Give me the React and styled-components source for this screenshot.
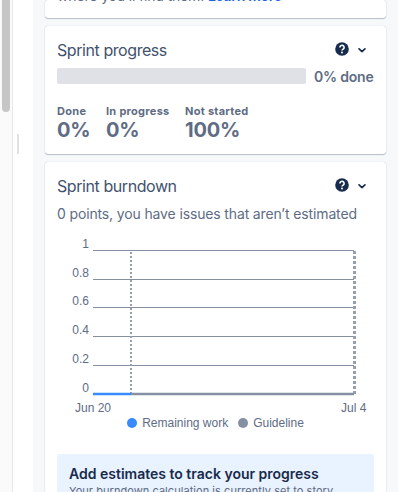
import React from "react";
import styled, { createGlobalStyle } from "styled-components";

const GlobalStyle = createGlobalStyle`
  * {
    box-sizing: border-box;
  }
  body {
    margin: 0;
    background: #fff;
    font-family: Inter, "Liberation Sans", sans-serif;
    color: #5e6c84;
    overflow: hidden;
  }
`;

const Screen = styled.div`
  display: flex;
  width: 416px;
  height: 492px;
  overflow: hidden;
`;

const ScrollTrack = styled.div`
  width: 13px;
  flex: none;
  padding-left: 2px;
  background: #fafafa;
  border-right: 1px solid #e8e8e8;
`;

const ScrollThumb = styled.div`
  width: 8px;
  height: 112px;
  background: #c6c6c6;
  border-radius: 0 0 4px 4px;
`;

const Gutter = styled.div`
  width: 20px;
  flex: none;
  padding: 134px 0 0 4px;
`;

const Grip = styled.div`
  width: 2px;
  height: 20px;
  background: #dfe1e6;
`;

const Panel = styled.main`
  width: 365px;
  flex: none;
  display: flex;
  flex-direction: column;
  gap: 8px;
  padding: 0 12px;
  background: #f7f8fa;
`;

const Card = styled.section`
  flex: none;
  height: ${(p) => p.$height}px;
  padding: 12px 12px 0;
  background: #fff;
  border-radius: 3px;
  box-shadow: 0 1px 1px rgba(9, 30, 66, 0.25), 0 0 1px rgba(9, 30, 66, 0.25);
  overflow: hidden;
`;

const IntroText = styled.p`
  margin: -26px 0 0;
  font-size: 14px;
  line-height: 20px;
  letter-spacing: -0.15px;
  white-space: nowrap;
`;

const Link = styled.a`
  color: #1d62e8;
  font-weight: 600;
  letter-spacing: -0.3px;
`;

const Header = styled.header`
  display: flex;
  align-items: center;
  height: 24px;
`;

const Title = styled.h2`
  flex: 1;
  margin: 0;
  font-size: 16px;
  font-weight: 400;
  letter-spacing: -0.43px;
  color: #42526e;
`;

const Icons = styled.div`
  display: flex;
  align-items: center;
  gap: 9px;
  padding: 0 8px 2px 0;
`;

const ProgressRow = styled.div`
  display: flex;
  align-items: center;
  gap: 8px;
  height: 16px;
  margin-top: 6px;
`;

const Track = styled.div`
  width: 249px;
  height: 16px;
  background: #dfe1e6;
  border-radius: 2px;
`;

const TrackLabel = styled.span`
  font-size: 14px;
  font-weight: 600;
  letter-spacing: -0.2px;
  white-space: nowrap;
`;

const Stats = styled.div`
  display: flex;
  gap: 16px;
  margin-top: 20px;
`;

const Stat = styled.div`
  width: ${(p) => p.$width}px;
  white-space: nowrap;
`;

const StatLabel = styled.div`
  font-size: 11px;
  line-height: 14px;
  font-weight: 700;
  letter-spacing: 0.28px;
`;

const StatValue = styled.div`
  font-size: 20px;
  line-height: 24px;
  font-weight: 700;
  letter-spacing: -0.2px;
`;

const Summary = styled.p`
  margin: 6px 0 0;
  font-size: 14px;
  line-height: 20px;
  letter-spacing: -0.14px;
  white-space: nowrap;
`;

const Chart = styled.svg`
  display: block;
  margin-top: 2px;
  overflow: visible;
  text {
    font-family: "Liberation Sans", Arial, sans-serif;
    font-size: 12px;
    fill: #5e6c84;
  }
`;

const Legend = styled.div`
  display: flex;
  justify-content: center;
  gap: 10px;
  height: 14px;
  font: 12px/14px "Liberation Sans", Arial, sans-serif;
`;

const LegendItem = styled.span`
  display: flex;
  align-items: center;
  gap: 5px;
  &::before {
    content: "";
    width: 10px;
    height: 10px;
    border-radius: 50%;
    background: ${(p) => p.$color};
  }
`;

const Notice = styled.aside`
  height: 80px;
  margin-top: 24px;
  padding: 10px 12px;
  background: #e9f2ff;
  border-radius: 3px;
  white-space: nowrap;
`;

const NoticeTitle = styled.h3`
  margin: 0;
  font-size: 14px;
  line-height: 20px;
  font-weight: 600;
  color: #172b4d;
`;

const NoticeText = styled.p`
  margin: 0;
  font-size: 11px;
  line-height: 14px;
  letter-spacing: 0.05px;
`;

const stats = [
  { label: "Done", value: "0%", width: 33 },
  { label: "In progress", value: "0%", width: 63 },
  { label: "Not started", value: "100%", width: 65 },
];

const ticks = [
  { label: "1", y: 24.5 },
  { label: "0.8", y: 53.5 },
  { label: "0.6", y: 81.5 },
  { label: "0.4", y: 110.5 },
  { label: "0.2", y: 139.5 },
];

function CardHeader({ title }) {
  return (
    <Header>
      <Title>{title}</Title>
      <Icons>
        <svg width="14" height="14" viewBox="0 0 14 14">
          <circle cx="7" cy="7" r="6.8" fill="#172b4d" />
          <path
            d="M4.9 5.4a2.1 2.1 0 1 1 3.3 1.7C7.4 7.6 7 7.8 7 8.6"
            fill="none"
            stroke="#fff"
            strokeWidth="1.6"
          />
          <circle cx="7" cy="10.6" r="1" fill="#fff" />
        </svg>
        <svg width="8" height="8" viewBox="0 0 8 8">
          <path
            d="M1.1 3.9L4 6.6L6.9 3.9"
            fill="none"
            stroke="#172b4d"
            strokeWidth="1.7"
            strokeLinecap="round"
            strokeLinejoin="round"
          />
        </svg>
      </Icons>
    </Header>
  );
}

function BurndownChart() {
  return (
    <Chart width="317" height="190" viewBox="0 0 317 190">
      {ticks.map((tick) => (
        <g key={tick.label}>
          <line x1="36" x2="297" y1={tick.y} y2={tick.y} stroke="#8590a2" />
          <text x="32" y={tick.y - 2.5} textAnchor="end">
            {tick.label}
          </text>
        </g>
      ))}
      <text x="32" y="166" textAnchor="end">0</text>
      <line x1="74" x2="74" y1="26" y2="167" stroke="#979eb0" strokeWidth="2" strokeDasharray="2 2" />
      <line x1="297.5" x2="297.5" y1="25" y2="168" stroke="#979eb0" strokeWidth="3" strokeDasharray="3 2" />
      <line x1="74" x2="297" y1="168" y2="168" stroke="#8590a2" strokeWidth="2.6" />
      <line x1="36" x2="74" y1="168" y2="168" stroke="#388bff" strokeWidth="2.6" />
      <text x="18" y="186">Jun 20</text>
      <text x="284" y="186">Jul 4</text>
    </Chart>
  );
}

export default function App() {
  return (
    <Screen>
      <GlobalStyle />
      <ScrollTrack>
        <ScrollThumb />
      </ScrollTrack>
      <Gutter>
        <Grip />
      </Gutter>
      <Panel>
        <Card $height={18}>
          <IntroText>
            where you’ll find them. <Link>Learn more</Link>
          </IntroText>
        </Card>
        <Card $height={128}>
          <CardHeader title="Sprint progress" />
          <ProgressRow>
            <Track />
            <TrackLabel>0% done</TrackLabel>
          </ProgressRow>
          <Stats>
            {stats.map((stat) => (
              <Stat key={stat.label} $width={stat.width}>
                <StatLabel>{stat.label}</StatLabel>
                <StatValue>{stat.value}</StatValue>
              </Stat>
            ))}
          </Stats>
        </Card>
        <Card $height={350}>
          <CardHeader title="Sprint burndown" />
          <Summary>0 points, you have issues that aren’t estimated</Summary>
          <BurndownChart />
          <Legend>
            <LegendItem $color="#388bff">Remaining work</LegendItem>
            <LegendItem $color="#8590a2">Guideline</LegendItem>
          </Legend>
          <Notice>
            <NoticeTitle>Add estimates to track your progress</NoticeTitle>
            <NoticeText>Your burndown calculation is currently set to story</NoticeText>
          </Notice>
        </Card>
      </Panel>
    </Screen>
  );
}
